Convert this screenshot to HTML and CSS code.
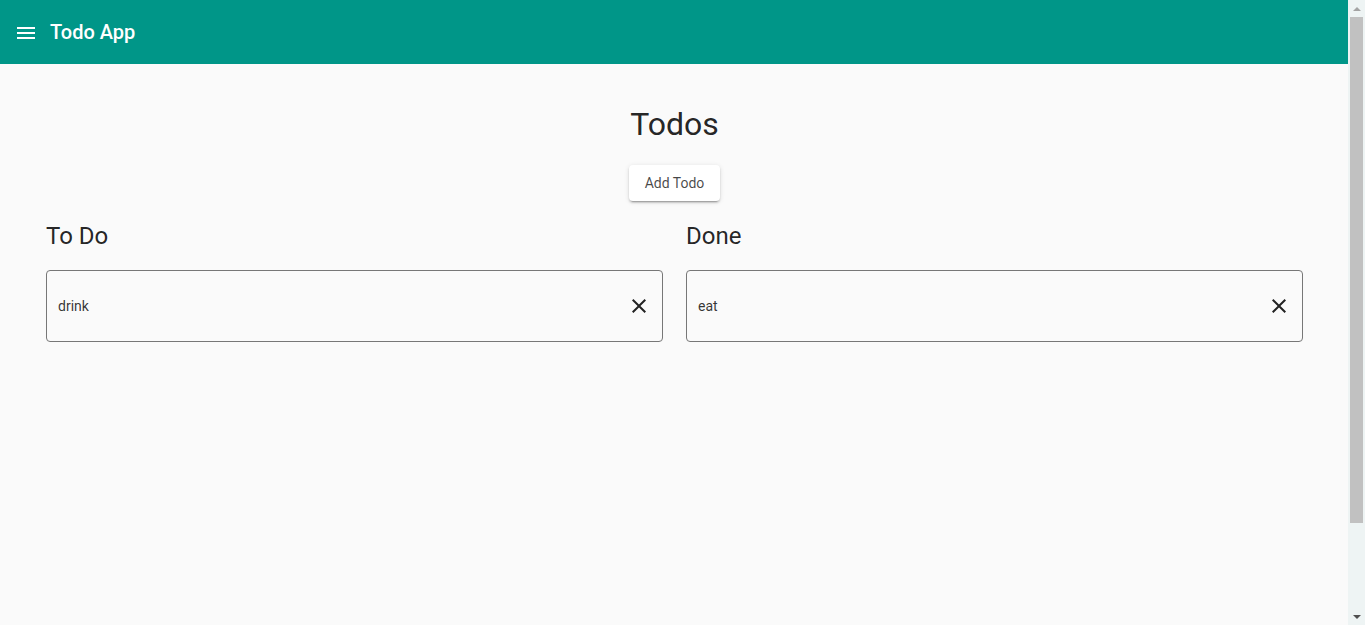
FILE: index.html
```html
<!DOCTYPE html>
<html>
<head>
<meta charset="utf-8">
<link rel="stylesheet" href="styles.css">
</head>
<body>
<div class="page">
  <header class="toolbar">
    <svg class="menu-icon" width="24" height="24" viewBox="0 0 24 24"><path d="M3 18h18v-2H3v2zm0-5h18v-2H3v2zm0-7v2h18V6H3z" fill="#fff"/></svg>
    <span class="title">Todo App</span>
  </header>
  <main class="content">
    <h1 class="page-title">Todos</h1>
    <button class="raised-btn">Add Todo</button>
    <div class="columns">
      <section class="column">
        <h2 class="col-title">To Do</h2>
        <div class="item">
          <span class="item-text">drink</span>
          <svg class="close" width="24" height="24" viewBox="0 0 24 24"><path d="M19 6.41L17.59 5 12 10.59 6.41 5 5 6.41 10.59 12 5 17.59 6.41 19 12 13.41 17.59 19 19 17.59 13.41 12z" fill="#222"/></svg>
        </div>
      </section>
      <section class="column">
        <h2 class="col-title">Done</h2>
        <div class="item">
          <span class="item-text">eat</span>
          <svg class="close" width="24" height="24" viewBox="0 0 24 24"><path d="M19 6.41L17.59 5 12 10.59 6.41 5 5 6.41 10.59 12 5 17.59 6.41 19 12 13.41 17.59 19 19 17.59 13.41 12z" fill="#222"/></svg>
        </div>
      </section>
    </div>
  </main>
</div>
<div class="scrollbar">
  <div class="arrow up"></div>
  <div class="track"><div class="thumb"></div></div>
  <div class="arrow down"></div>
</div>
</body>
</html>
```
FILE: styles.css
```css
html, body {
  margin: 0;
  padding: 0;
}
body {
  background: #fafafa;
  font-family: Roboto, "Helvetica Neue", sans-serif;
  color: rgba(0,0,0,0.87);
  height: 625px;
  overflow: hidden;
  display: flex;
}
.page {
  flex: 1;
  min-width: 0;
}
.toolbar {
  height: 64px;
  background: #009688;
  color: #fff;
  display: flex;
  align-items: center;
  padding: 0 16px 0 14px;
  box-sizing: border-box;
}
.menu-icon {
  display: block;
  margin-right: 12px;
  margin-top: 1px;
}
.title {
  font-size: 20px;
  font-weight: 500;
}
.content {
  display: flex;
  flex-direction: column;
  align-items: center;
  padding: 0 45px 0 46px;
}
.page-title {
  font-size: 32px;
  font-weight: 400;
  line-height: 40px;
  margin: 40px 0 21px;
}
.raised-btn {
  font-family: Roboto, sans-serif;
  font-size: 14px;
  font-weight: 400;
  color: rgba(0,0,0,0.72);
  background: #fff;
  border: none;
  border-radius: 4px;
  height: 36px;
  padding: 0 16px;
  box-shadow: 0 3px 1px -2px rgba(0,0,0,.2), 0 2px 2px 0 rgba(0,0,0,.14), 0 1px 5px 0 rgba(0,0,0,.12);
}
.columns {
  display: grid;
  grid-template-columns: 1fr 1fr;
  gap: 23px;
  width: 100%;
  margin-top: 19px;
}
.col-title {
  font-size: 24px;
  font-weight: 400;
  line-height: 32px;
  margin: 0 0 18px;
}
.item {
  height: 72px;
  border: 1px solid #777;
  border-radius: 4px;
  box-sizing: border-box;
  display: flex;
  align-items: center;
  justify-content: space-between;
  padding: 0 11px 1px;
  font-size: 14px;
}
.item-text {
  color: rgba(0,0,0,0.8);
}
.close {
  display: block;
}
.scrollbar {
  width: 17px;
  height: 625px;
  background: #eef4f4;
  display: flex;
  flex-direction: column;
  flex-shrink: 0;
}
.arrow {
  height: 17px;
  display: flex;
  align-items: center;
  justify-content: center;
}
.arrow::before {
  content: "";
  width: 0;
  height: 0;
  border-left: 4px solid transparent;
  border-right: 4px solid transparent;
}
.arrow.up::before {
  border-bottom: 4px solid #a3a3a3;
}
.arrow.down::before {
  border-top: 4px solid #505050;
}
.track {
  flex: 1;
  padding: 0 2px;
}
.thumb {
  height: 506px;
  background: #c1c1c1;
}
```
